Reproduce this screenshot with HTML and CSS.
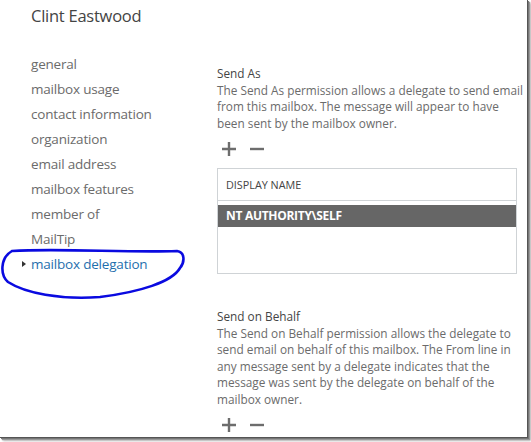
FILE: index.html
```html
<!DOCTYPE html>
<html>
<head>
<meta charset="utf-8">
<link rel="stylesheet" href="styles.css">
</head>
<body>
<div class="frame">
  <h1 class="title">Clint Eastwood</h1>
  <div class="columns">
    <nav class="nav">
      <div class="nav-item">general</div>
      <div class="nav-item">mailbox usage</div>
      <div class="nav-item">contact information</div>
      <div class="nav-item">organization</div>
      <div class="nav-item">email address</div>
      <div class="nav-item">mailbox features</div>
      <div class="nav-item">member of</div>
      <div class="nav-item">MailTip</div>
      <div class="nav-item active"><span class="caret"></span>mailbox delegation</div>
    </nav>
    <main class="content">
      <section class="perm">
        <div class="perm-title">Send As</div>
        <p class="perm-desc">The Send As permission allows a delegate to send email from this mailbox. The message will appear to have been sent by the mailbox owner.</p>
        <div class="tools">
          <svg class="tool" width="16" height="16" viewBox="0 0 16 16"><path d="M8 1v14M1 8h14" stroke="#6d6d6d" stroke-width="2.4" fill="none"/></svg>
          <svg class="tool" width="16" height="16" viewBox="0 0 16 16"><path d="M1 8h14" stroke="#6d6d6d" stroke-width="2.4" fill="none"/></svg>
        </div>
        <div class="grid">
          <div class="grid-head">DISPLAY NAME</div>
          <div class="grid-row selected">NT AUTHORITY\SELF</div>
        </div>
      </section>
      <section class="perm behalf">
        <div class="perm-title">Send on Behalf</div>
        <p class="perm-desc">The Send on Behalf permission allows the delegate to send email on behalf of this mailbox. The From line in any message sent by a delegate indicates that the message was sent by the delegate on behalf of the mailbox owner.</p>
        <div class="tools">
          <svg class="tool" width="16" height="16" viewBox="0 0 16 16"><path d="M8 1v14M1 8h14" stroke="#6d6d6d" stroke-width="2.4" fill="none"/></svg>
          <svg class="tool" width="16" height="16" viewBox="0 0 16 16"><path d="M1 8h14" stroke="#6d6d6d" stroke-width="2.4" fill="none"/></svg>
        </div>
      </section>
    </main>
  </div>
  <svg class="scribble" width="190" height="305" viewBox="0 0 190 305">
    <path d="M12 251 C 60 248, 130 253, 177 251 C 185 252, 185 262, 180 268 C 172 282, 140 292, 100 297 C 60 300, 25 293, 8 282 C 0 275, 0 258, 12 251" fill="none" stroke="#0a0ae0" stroke-width="2.6" stroke-linecap="round"/>
  </svg>
</div>
</body>
</html>
```
FILE: styles.css
```css
html, body {
  margin: 0;
  padding: 0;
  background: #fff;
}
body {
  font-family: "Open Sans", "Segoe UI", "Liberation Sans", sans-serif;
  width: 531px;
  height: 442px;
  overflow: hidden;
}
.frame {
  position: relative;
  width: 528px;
  height: 438px;
  box-sizing: border-box;
  border-right: 1px solid #555;
  border-bottom: 1px solid #555;
  box-shadow: 1px 1px 0 #777, 2px 2px 1px #999, 3px 3px 2px #bbb;
  overflow: hidden;
  background: #fff;
}
.title {
  margin: 0;
  padding: 4px 0 0 31px;
  font-size: 16.5px;
  font-weight: 400;
  color: #444;
  line-height: 24px;
  letter-spacing: -0.25px;
}
.columns {
  display: flex;
  padding-top: 24px;
}
.nav {
  width: 188px;
  padding-left: 31px;
  display: flex;
  flex-direction: column;
}
.nav-item {
  font-size: 13.5px;
  line-height: 25px;
  color: #6b6b6b;
  position: relative;
  letter-spacing: -0.2px;
}
.nav-item.active {
  color: #1f6fad;
}
.caret {
  position: absolute;
  left: -9px;
  top: 9px;
  width: 0;
  height: 0;
  border-top: 3.5px solid transparent;
  border-bottom: 3.5px solid transparent;
  border-left: 4px solid #333;
}
.content {
  flex: 1;
  padding-right: 4px;
}
.perm {
  display: flex;
  flex-direction: column;
}
.perm-title {
  font-size: 11.8px;
  color: #444;
  line-height: 16.5px;
  padding-top: 13px;
}
.perm-desc {
  margin: 0;
  font-size: 11.8px;
  line-height: 16.5px;
  color: #6b6b6b;
  width: 306px;
}
.tools {
  display: flex;
  gap: 12px;
  padding: 10px 0 0 4px;
  height: 16px;
}
.grid {
  margin-top: 11px;
  width: 300px;
  height: 106px;
  box-sizing: border-box;
  border: 1px solid #cfd3d6;
}
.grid-head {
  font-size: 10.8px;
  color: #444;
  line-height: 31px;
  padding-left: 8px;
  border-bottom: 1px solid #cfd3d6;
}
.grid-row {
  margin-top: 4px;
  font-size: 12px;
  font-weight: 700;
  line-height: 22px;
  padding-left: 8px;
  letter-spacing: -0.3px;
}
.grid-row.selected {
  background: #666;
  color: #fff;
}
.behalf {
  margin-top: 21px;
}
.scribble {
  position: absolute;
  left: 0;
  top: 0;
  pointer-events: none;
}
```
